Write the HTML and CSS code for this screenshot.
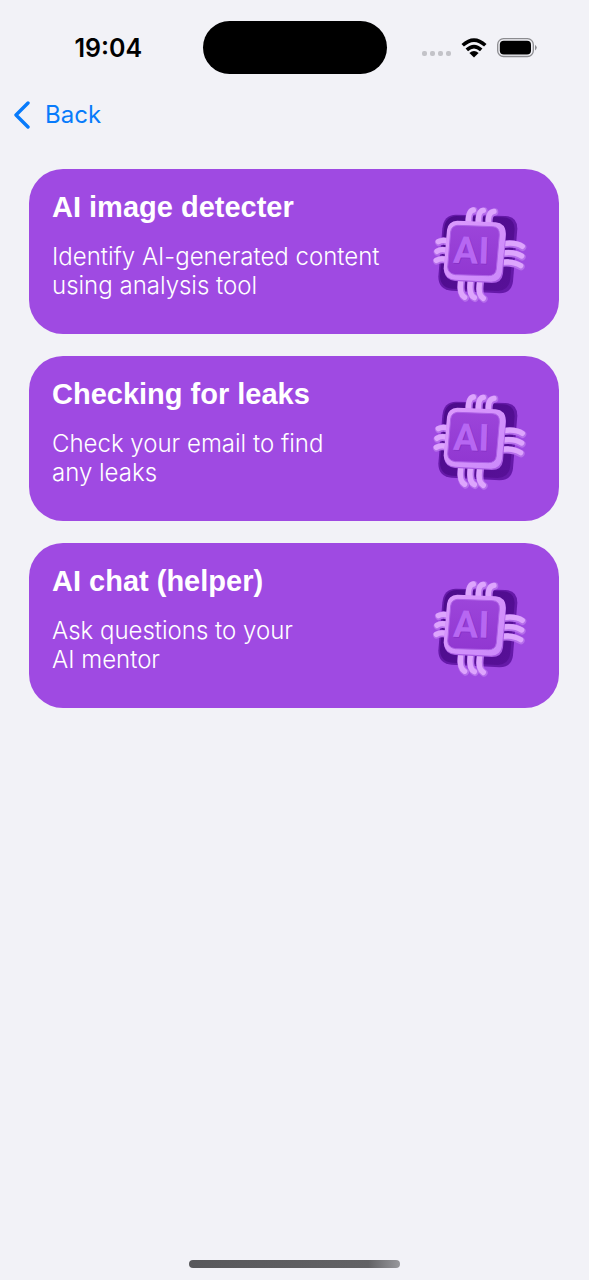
FILE: index.html
```html
<!DOCTYPE html>
<html lang="en">
<head>
<meta charset="utf-8">
<meta name="viewport" content="width=device-width, initial-scale=1">
<title>AI tools</title>
<link rel="stylesheet" href="styles.css">
</head>
<body>
<svg class="defs" aria-hidden="true">
  <defs>
    <linearGradient id="frame" x1="0" y1="0" x2="1" y2="1"><stop offset="0" stop-color="#dc9bfd"/><stop offset="1" stop-color="#cb89fa"/></linearGradient>
    <linearGradient id="face" x1="0" y1="0" x2="0" y2="1"><stop offset="0" stop-color="#9c45da"/><stop offset="1" stop-color="#9137d1"/></linearGradient>
    <linearGradient id="base" x1="0" y1="0" x2="1" y2="1"><stop offset="0" stop-color="#4b0b8a"/><stop offset="1" stop-color="#581098"/></linearGradient>
    <symbol id="chip" viewBox="30 30 300 300">
      <path fill="#6519a8" d="M108 62 L256 66 Q292 68 292 104 L279 262 Q275 298 239 298 L95 290 Q56 287 55 248 L67 104 Q71 62 108 62Z"/>
      <path fill="url(#base)" d="M110 66 L249 70 Q283 71 284 105 L271 255 Q267 291 233 291 L96 284 Q61 281 60 246 L72 106 Q75 67 110 66Z"/>
      <g fill="none" stroke-linecap="round">
        <g stroke="#b66eec" stroke-width="22">
          <path d="M147 86 Q146 52 162 50M177 86 Q176 53 192 51M207 87 Q205 56 224 54"/>
          <path d="M82 143 Q67 138 56 145M80 171 Q63 166 52 174M78 198 Q61 194 50 201"/>
          <path d="M249 151 Q287 146 308 160M248 179 Q285 175 306 189M246 207 Q282 204 303 218"/>
          <path d="M124 262 Q119 303 136 312M153 264 Q148 304 165 313M181 265 Q175 305 192 315"/>
        </g>
        <g stroke="#dda5fd" stroke-width="16">
          <path d="M145 84 Q145 50 160 48M175 84 Q175 50 190 49M205 85 Q204 54 222 52"/>
          <path d="M82 141 Q67 136 55 143M80 169 Q63 164 51 172M78 196 Q61 192 49 199"/>
          <path d="M250 149 Q287 143 307 157M248 177 Q285 172 305 186M246 205 Q282 201 302 215"/>
          <path d="M122 262 Q117 301 134 310M151 264 Q146 302 163 311M179 265 Q173 303 190 313"/>
        </g>
      </g>
      <path fill="#a95be3" d="M112 82 L227 88 Q258 91 258 122 L249 239 Q245 267 216 267 L105 261 Q75 258 72 229 L82 110 Q84 84 112 82Z"/>
      <path fill="url(#frame)" d="M112 80 L227 85 Q257 88 257 119 L246 234 Q242 262 213 263 L105 257 Q74 254 71 224 L81 108 Q84 82 112 80Z"/>
      <path fill="url(#face)" stroke="#ae61e7" stroke-width="3" d="M113 94 L218 98 Q239 99 238 123 L229 225 Q227 245 205 245 L106 242 Q84 239 83 219 L92 114 Q94 96 113 94Z"/>
      <g class="chip-text" transform="rotate(2 153 168)">
        <text x="102" y="210" fill="#842fc4">AI</text>
        <text x="100" y="208" fill="#b767f2">AI</text>
      </g>
    </symbol>
  </defs>
</svg>
<div class="screen">
  <header class="status">
    <time class="clock">19:04</time>
    <div class="island"></div>
    <div class="indicators">
      <span class="signal"><i></i><i></i><i></i><i></i></span>
      <svg class="wifi" viewBox="0 0 26 20" aria-label="Wi-Fi">
        <g fill="none" stroke="#000" stroke-width="3.6"><path d="M1.7 7.3 Q13 -3.2 24.3 7.3"/><path d="M5.8 11.9 Q13 5.2 20.2 11.9"/></g>
        <path d="M8.4 15 Q13 11 17.6 15 L13 19.5Z"/>
      </svg>
      <svg class="battery" viewBox="0 0 40 20" aria-label="Battery">
        <rect x="0.7" y="0.7" width="35.6" height="17.8" rx="5.8" fill="none" stroke="#8c8c90" stroke-width="1.3"/>
        <rect x="2.8" y="2.8" width="31.2" height="13.6" rx="4" fill="#000"/>
        <path d="M38 6.8 Q41.5 9.6 38 12.4Z" fill="#8c8c90"/>
      </svg>
    </div>
  </header>
  <nav class="nav">
    <a class="back" href="#">
      <svg class="chevron" viewBox="0 0 18 28" aria-hidden="true"><path d="M15 2 L3 14 L15 26" fill="none" stroke="#087bfb" stroke-width="3.4" stroke-linecap="round" stroke-linejoin="round"/></svg>
      <span>Back</span>
    </a>
  </nav>
  <main class="cards">
    <button class="card" type="button">
      <span class="copy"><span class="title">AI image detecter</span><span class="desc">Identify AI-generated content<br>using analysis tool</span></span>
      <svg class="chip" aria-hidden="true"><use href="#chip"/></svg>
    </button>
    <button class="card" type="button">
      <span class="copy"><span class="title">Checking for leaks</span><span class="desc">Check your email to find<br>any leaks</span></span>
      <svg class="chip" aria-hidden="true"><use href="#chip"/></svg>
    </button>
    <button class="card" type="button">
      <span class="copy"><span class="title">AI chat (helper)</span><span class="desc">Ask questions to your<br>AI mentor</span></span>
      <svg class="chip" aria-hidden="true"><use href="#chip"/></svg>
    </button>
  </main>
  <div class="home"></div>
</div>
</body>
</html>
```
FILE: styles.css
```css
* { box-sizing: border-box; }
body {
  margin: 0;
  background: #f2f2f7;
  font-family: Inter, "Liberation Sans", sans-serif;
}
.defs { position: absolute; width: 0; height: 0; }
.screen {
  min-height: 100vh;
  display: flex;
  flex-direction: column;
}
.status {
  display: grid;
  grid-template-columns: 1fr 184px 1fr;
  align-items: center;
  padding-top: 21px;
}
.clock {
  padding-left: 14px;
  text-align: center;
  font-size: 25px;
  line-height: 30px;
  font-weight: 600;
}
.island {
  height: 53px;
  border-radius: 27px;
  background: #000;
}
.indicators {
  display: flex;
  align-items: center;
  justify-content: flex-end;
  gap: 10px;
  padding-right: 52px;
}
.signal { display: flex; gap: 3px; padding-top: 12px; }
.signal i {
  width: 5px;
  height: 5px;
  border-radius: 2px;
  background: #c3c3c8;
}
.wifi { width: 26px; height: 20px; }
.battery { width: 40px; height: 20px; }
.nav { padding: 22px 13px; }
.back {
  display: inline-flex;
  align-items: center;
  gap: 14px;
  color: #087bfb;
  font-size: 24px;
  line-height: 38px;
  text-decoration: none;
}
.chevron { width: 18px; height: 28px; }
.cards {
  flex: 1;
  display: flex;
  flex-direction: column;
  gap: 22px;
  padding: 13px 30px 22px 29px;
}
.card {
  display: flex;
  align-items: flex-start;
  justify-content: space-between;
  padding: 21px 29px 30px 23px;
  border: 0;
  border-radius: 34px;
  background: #9f4ae2;
  color: #fff;
  font-family: inherit;
  text-align: left;
}
.copy { display: flex; flex-direction: column; gap: 18px; }
.title {
  font-family: "Liberation Sans", Arial, sans-serif;
  font-size: 29px;
  line-height: 34px;
  font-weight: 700;
}
.desc {
  font-size: 24px;
  line-height: 29px;
  font-weight: 300;
}
.chip { width: 100px; height: 100px; margin-top: 14px; }
.chip-text {
  font-family: Roboto, "Liberation Sans", sans-serif;
  font-size: 112px;
  font-weight: 700;
}
.home {
  width: 211px;
  height: 8px;
  margin: 0 auto 12px;
  border-radius: 4px;
  background: linear-gradient(90deg, #58585b, #626265 85%, #98989c);
}
```
